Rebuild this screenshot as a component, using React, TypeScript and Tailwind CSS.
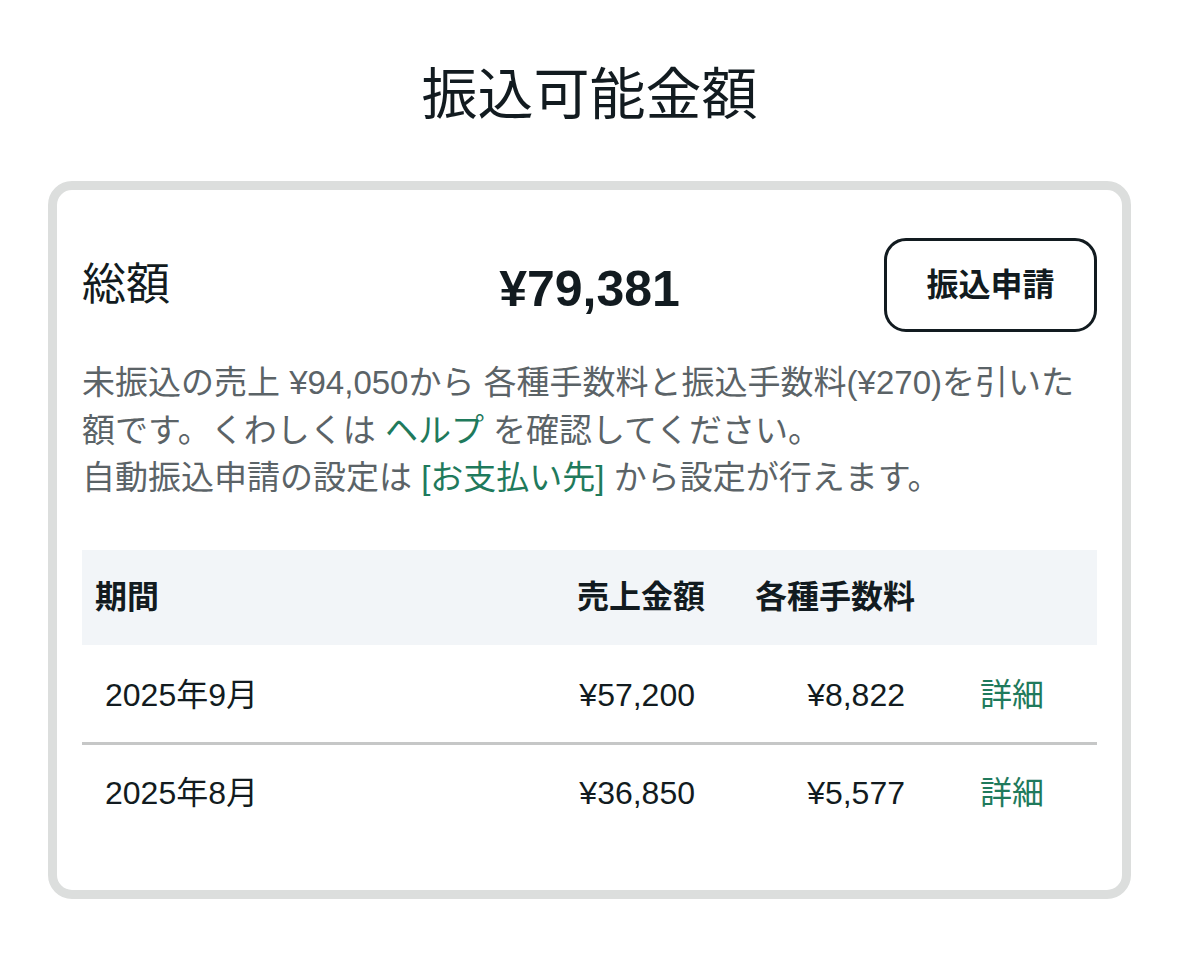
import React from 'react';

const rows = [
  { period: '2025年9月', sales: '¥57,200', fee: '¥8,822' },
  { period: '2025年8月', sales: '¥36,850', fee: '¥5,577' },
];

export default function App() {
  return (
    <div
      className="min-h-[965px] w-[1179px] bg-white px-[48px] pt-[58px] text-[#121b20]"
      style={{ fontFamily: '"Liberation Sans", "Noto Sans CJK JP", sans-serif' }}
    >
      <h1 className="text-center text-[56px] leading-[74px] font-normal">振込可能金額</h1>

      <div className="mt-[49px] rounded-[24px] border-[9px] border-[#dcdedd] px-[25px] pt-[48px] pb-[48px]">
        {/* 総額 */}
        <div className="grid grid-cols-[1fr_auto_1fr] items-center">
          <div className="text-[44px] leading-none">総額</div>
          <div className="mt-[8px] text-[50px] font-bold leading-none">¥79,381</div>
          <button className="justify-self-end h-[94px] w-[213px] rounded-[22px] border-[3px] border-[#121b20] bg-white text-[32px] font-bold">
            振込申請
          </button>
        </div>

        {/* 説明 */}
        <p className="mt-[27px] text-[33px] leading-[47.5px] text-[#5b6367]">
          未振込の売上 ¥94,050から 各種手数料と振込手数料(¥270)を引いた額です。くわしくは{' '}
          <a className="text-[#1f7a5c]">ヘルプ</a> を確認してください。
          <br />
          自動振込申請の設定は <a className="text-[#1f7a5c]">[お支払い先]</a> から設定が行えます。
        </p>

        {/* 明細 */}
        <div className="mt-[48px]">
          <div className="grid h-[95px] grid-cols-[1fr_160px_210px_170px] items-center bg-[#f2f5f8] text-[32px] font-bold">
            <div className="pl-[13px]">期間</div>
            <div className="pr-3 text-right">売上金額</div>
            <div className="pr-3 text-right">各種手数料</div>
            <div />
          </div>
          {rows.map((r, i) => (
            <div
              key={r.period}
              className={`grid grid-cols-[1fr_160px_210px_170px] items-center text-[32px] ${
                i === 0 ? 'h-[100px] border-b-[3px] border-[#c6c7c7] pt-[3px]' : 'h-[97px]'
              }`}
            >
              <div className="pl-[23px]">{r.period}</div>
              <div className="pr-[22px] text-right">{r.sales}</div>
              <div className="pr-[22px] text-right">{r.fee}</div>
              <div className="text-center text-[#1f7a5c]">詳細</div>
            </div>
          ))}
        </div>
      </div>
    </div>
  );
}
